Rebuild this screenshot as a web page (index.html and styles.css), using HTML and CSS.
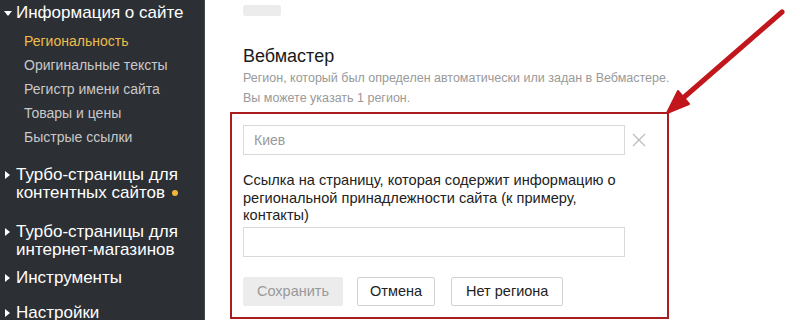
FILE: index.html
```html
<!DOCTYPE html>
<html lang="ru">
<head>
<meta charset="utf-8">
<link rel="stylesheet" href="styles.css">
</head>
<body>
<div class="page">
  <nav class="sidebar">
    <div class="group group-open">
      <div class="group-title"><span class="tri tri-down"></span>Информация о сайте</div>
      <ul class="sub">
        <li class="active">Региональность</li>
        <li>Оригинальные тексты</li>
        <li>Регистр имени сайта</li>
        <li>Товары и цены</li>
        <li>Быстрые ссылки</li>
      </ul>
    </div>
    <div class="group group-wide"><div class="group-title"><span class="tri tri-right"></span>Турбо-страницы для<br>контентных сайтов <span class="dot"></span></div></div>
    <div class="group group-tight"><div class="group-title"><span class="tri tri-right"></span>Турбо-страницы для<br>интернет-магазинов</div></div>
    <div class="group"><div class="group-title"><span class="tri tri-right"></span>Инструменты</div></div>
    <div class="group"><div class="group-title"><span class="tri tri-right"></span>Настройки</div></div>
  </nav>
  <main class="main">
    <div class="blur"></div>
    <h2 class="title">Вебмастер</h2>
    <p class="desc">Регион, который был определен автоматически или задан в Вебмастере.<br>Вы можете указать 1 регион.</p>
    <div class="box">
      <div class="row">
        <div class="input placeholder">Киев</div>
        <svg class="clear" width="14" height="14" viewBox="0 0 14 14"><path d="M1 1L13 13M13 1L1 13" stroke="#bdbdbd" stroke-width="1.3" fill="none"/></svg>
      </div>
      <div class="label">Ссылка на страницу, которая содержит информацию о<br>региональной принадлежности сайта (к примеру,<br>контакты)</div>
      <div class="input"></div>
      <div class="buttons">
        <div class="btn btn-disabled">Сохранить</div>
        <div class="btn">Отмена</div>
        <div class="btn btn-last">Нет региона</div>
      </div>
    </div>
  </main>
  <svg class="arrow" width="800" height="320" viewBox="0 0 800 320">
    <line x1="782" y1="12" x2="682" y2="99" stroke="#c0161c" stroke-width="5" stroke-linecap="round"/>
    <polygon points="667,113 689,104 678,91" fill="#c0161c" stroke="#c0161c" stroke-width="2" stroke-linejoin="round"/>
  </svg>
</div>
</body>
</html>
```
FILE: styles.css
```css
html, body {
  margin: 0;
  padding: 0;
  background: #fff;
}
body {
  font-family: "Liberation Sans", Arial, sans-serif;
  width: 800px;
  height: 320px;
  overflow: hidden;
}
.page {
  display: flex;
  height: 320px;
  position: relative;
}
.sidebar {
  width: 205px;
  flex: none;
  background: #2c2f34;
  border-right: 1px solid #45484d;
  color: #fff;
  padding-top: 4px;
  box-sizing: border-box;
  overflow: hidden;
}
.group-title {
  font-size: 17px;
  line-height: 18px;
  padding-left: 16px;
  position: relative;
  margin-bottom: 17px;
}
.group-open .group-title {
  margin-bottom: 7px;
}
.group-wide .group-title {
  margin-bottom: 21px;
}
.group-tight .group-title {
  margin-bottom: 10px;
}
.tri {
  position: absolute;
  left: 5px;
  top: 5px;
  width: 0;
  height: 0;
}
.tri-down {
  border-left: 4px solid transparent;
  border-right: 4px solid transparent;
  border-top: 5px solid #fff;
  top: 7px;
  left: 4px;
}
.tri-right {
  border-top: 4px solid transparent;
  border-bottom: 4px solid transparent;
  border-left: 5px solid #fff;
}
.dot {
  display: inline-block;
  width: 6px;
  height: 6px;
  border-radius: 50%;
  background: #f3b53a;
  vertical-align: middle;
  margin-left: 2px;
  position: relative;
  top: -1px;
}
.sub {
  list-style: none;
  margin: 0 0 17px;
  padding: 0 0 0 24px;
}
.sub li {
  font-size: 14px;
  line-height: 24px;
  color: #c9c9c9;
}
.sub li.active {
  color: #ecbd4a;
}
.main {
  flex: 1;
  padding-left: 38px;
}
.blur {
  width: 38px;
  height: 11px;
  background: #ececec;
  margin-top: 5px;
  border-radius: 2px;
}
.title {
  font-size: 18px;
  font-weight: normal;
  color: #1a1a1a;
  margin: 29px 0 0;
  line-height: 22px;
}
.desc {
  font-size: 12.5px;
  line-height: 20px;
  color: #999;
  margin: 1px 0 0;
}
.box {
  margin-top: 4px;
  margin-left: -13px;
  width: 439px;
  height: 207px;
  box-sizing: border-box;
  border: 2px solid #a91d1f;
  padding: 11px 0 0 11px;
}
.row {
  display: flex;
  align-items: center;
  gap: 7px;
}
.input {
  width: 382px;
  height: 30px;
  box-sizing: border-box;
  border: 1px solid #d9d9d9;
  font-size: 14px;
  line-height: 28px;
  padding-left: 10px;
}
.placeholder {
  color: #9a9a9a;
}
.clear {
  display: block;
}
.label {
  font-size: 14.6px;
  line-height: 17.5px;
  color: #222;
  margin-top: 17px;
  margin-bottom: 2px;
}
.buttons {
  display: flex;
  gap: 14px;
  margin-top: 20px;
}
.btn {
  height: 29px;
  box-sizing: border-box;
  border: 1px solid #d2d2d2;
  border-radius: 2px;
  font-size: 14.5px;
  line-height: 27px;
  color: #222;
  padding: 0 12px;
  background: #fff;
}
.btn-last {
  margin-left: 2px;
  padding: 0 14px;
}
.btn-disabled {
  background: #ececec;
  border-color: #ececec;
  color: #999;
  width: 100px;
  text-align: center;
  padding: 0;
}
.arrow {
  position: absolute;
  left: 0;
  top: 0;
  pointer-events: none;
}
```
